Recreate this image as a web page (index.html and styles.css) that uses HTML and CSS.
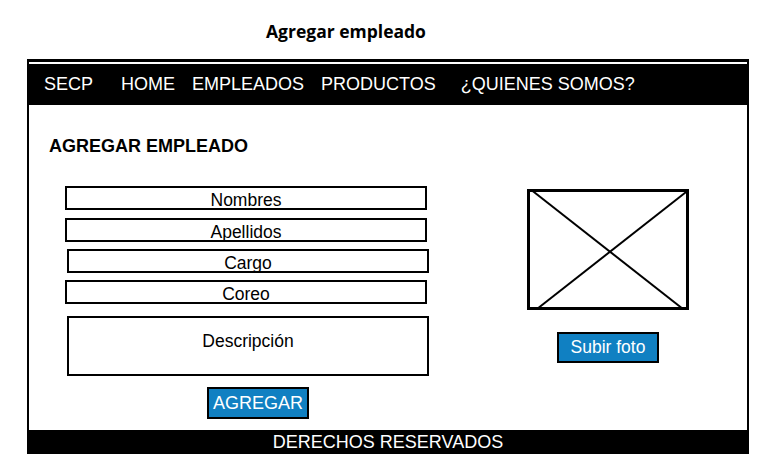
FILE: index.html
```html
<!DOCTYPE html>
<html lang="es">
<head>
  <meta charset="UTF-8" />
  <title>Agregar empleado</title>
  <link rel="stylesheet" href="styles.css">
</head>
<body>

<h1 class="page-title">Agregar empleado</h1>

<div class="frame">
  <nav class="topnav">
    <span class="brand">SECP</span>
    <a href="#">HOME</a>
    <a href="#">EMPLEADOS</a>
    <a href="#">PRODUCTOS</a>
    <a href="#" class="about">¿QUIENES SOMOS?</a>
  </nav>

  <section class="content">
    <h2>AGREGAR EMPLEADO</h2>
    <div class="row">
      <div class="form">
        <div class="field">Nombres</div>
        <div class="field">Apellidos</div>
        <div class="field shifted">Cargo</div>
        <div class="field">Coreo</div>
        <div class="field area shifted">Descripción</div>
        <button class="blue-button add-btn">AGREGAR</button>
      </div>
      <div class="photo">
        <svg class="placeholder" width="162" height="121" viewBox="0 0 162 121">
          <rect x="1.5" y="1.5" width="159" height="118" fill="#fff" stroke="#000" stroke-width="3"/>
          <line x1="5" y1="1.5" x2="156" y2="120" stroke="#000" stroke-width="2"/>
          <line x1="161" y1="1.5" x2="10" y2="120" stroke="#000" stroke-width="2"/>
        </svg>
        <button class="blue-button">Subir foto</button>
      </div>
    </div>
  </section>

  <footer class="bottombar">DERECHOS RESERVADOS</footer>
</div>

</body>
</html>
```

FILE: styles.css
```css
:root {
  --ink: #000;
  --blue: #1080c2;
  --default-font: "Liberation Sans", Arial, sans-serif;
}
body {
  margin: 0;
  background: #fff;
  color: var(--ink);
  font-family: var(--default-font);
}
.page-title {
  margin: 0;
  padding: 19px 0 0 266px;
  height: 40px;
  font-family: "Open Sans", sans-serif;
  font-weight: 700;
  font-size: 17.5px;
  line-height: 24px;
}
.frame {
  margin: 0 0 0 27px;
  width: 722px;
  box-sizing: border-box;
  border: 2px solid var(--ink);
  border-top-width: 3px;
  border-bottom: 0;
  padding-top: 2px;
}
.topnav {
  display: flex;
  align-items: center;
  gap: 17px;
  height: 41px;
  padding-left: 17px;
  margin: 0 -2px;
  background: var(--ink);
  font-size: 18px;
}
.topnav a, .topnav .brand {
  color: #fff;
  text-decoration: none;
}
.topnav .brand {
  margin-right: 11px;
}
.topnav .about {
  margin-left: 8px;
}
.content {
  padding: 31px 0 11px 20px;
}
.content h2 {
  margin: 0 0 30px;
  font-size: 18px;
  line-height: 20px;
  font-weight: 700;
}
.row {
  display: flex;
}
.form {
  display: flex;
  flex-direction: column;
  gap: 7px;
  margin-left: 16px;
  width: 364px;
}
.field {
  width: 362px;
  height: 24px;
  box-sizing: border-box;
  border: 2px solid var(--ink);
  padding-top: 4px;
  text-align: center;
  font-size: 17.5px;
  line-height: 17px;
}
.field:first-child {
  margin-bottom: 1px;
}
.shifted {
  margin-left: 2px;
}
.area {
  height: 60px;
  margin-top: 5px;
  padding-top: 15px;
}
.blue-button {
  background: var(--blue);
  color: #fff;
  border: 2px solid var(--ink);
  font-family: inherit;
  font-size: 18px;
  padding: 0;
  cursor: pointer;
}
.add-btn {
  width: 102px;
  height: 32px;
  margin: 4px 0 0 142px;
}
.photo {
  margin: 3px 0 0 98px;
  display: flex;
  flex-direction: column;
  align-items: center;
  width: 162px;
}
.placeholder {
  display: block;
}
.photo .blue-button {
  margin-top: 22px;
  width: 102px;
  height: 31px;
  font-size: 17.5px;
}
.bottombar {
  margin: 0 -2px;
  height: 24px;
  background: var(--ink);
  color: #fff;
  text-align: center;
  font-size: 18px;
  line-height: 24px;
}
```
